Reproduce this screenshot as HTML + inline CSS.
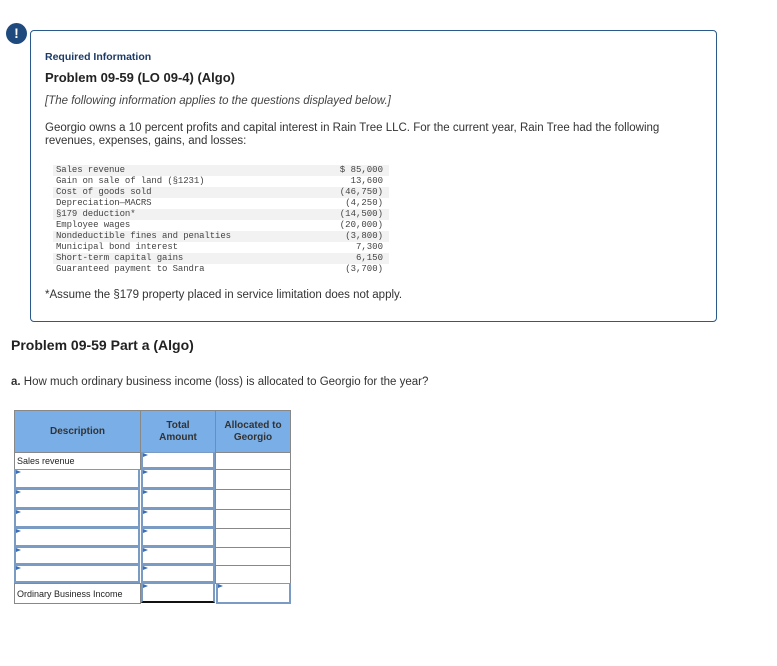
<!DOCTYPE html>
<html><head><meta charset="utf-8"><style>
body{margin:0;width:777px;height:666px;background:#fff;font-family:"Liberation Sans",sans-serif;color:#222;position:relative;overflow:hidden}
.a{position:absolute;white-space:nowrap}
.box{position:absolute;left:30px;top:30px;width:685px;height:290px;border:1px solid #2a5a8c;border-radius:4px}
.icon{position:absolute;left:6px;top:23px;width:21px;height:21px;border-radius:50%;background:#1e4a7e;color:#fff;font-weight:bold;font-size:14px;text-align:center;line-height:21px}
.dt{position:absolute;left:53px;width:336px;height:11px;font-family:"Liberation Mono",monospace;font-size:9px;line-height:11px;color:#444}
.dt span{position:absolute;left:3px;letter-spacing:-0.1px}
.dt b{position:absolute;right:6px;font-weight:normal}
.g{background:#f2f2f2}
.c{position:absolute;border:1px solid #888;box-sizing:border-box;background:#fff}
.h{background:#7aaee6;font-weight:bold;font-size:10px;color:#333;text-align:center;display:flex;align-items:center;justify-content:center;line-height:12px}
.in{border:2px solid #7a9cc4;border-top-width:1px}
.in:before{content:"";position:absolute;left:0;top:0;border-left:5px solid #3a6fb8;border-top:2px solid transparent;border-bottom:2px solid transparent}
.t{font-size:9px;padding:3px 2px;color:#222}
</style></head><body>
<div class="box"></div>
<div class="icon">!</div>
<div class="a" style="left:45px;top:51px;font-size:10.5px;font-weight:bold;color:#1e3a66">Required Information</div>
<div class="a" style="left:45px;top:70px;font-size:13px;font-weight:bold;color:#222">Problem 09-59 (LO 09-4) (Algo)</div>
<div class="a" style="left:45px;top:95px;font-size:11.5px;font-style:italic;color:#444">[The following information applies to the questions displayed below.]</div>
<div class="a" style="left:45px;top:122px;font-size:11.5px;line-height:13px;color:#333">Georgio owns a 10 percent profits and capital interest in Rain Tree LLC. For the current year, Rain Tree had the following<br>revenues, expenses, gains, and losses:</div>

<div class="dt g" style="top:165px"><span>Sales revenue</span><b>$ 85,000</b></div>
<div class="dt" style="top:176px"><span>Gain on sale of land (§1231)</span><b>13,600</b></div>
<div class="dt g" style="top:187px"><span>Cost of goods sold</span><b>(46,750)</b></div>
<div class="dt" style="top:198px"><span>Depreciation—MACRS</span><b>(4,250)</b></div>
<div class="dt g" style="top:209px"><span>§179 deduction*</span><b>(14,500)</b></div>
<div class="dt" style="top:220px"><span>Employee wages</span><b>(20,000)</b></div>
<div class="dt g" style="top:231px"><span>Nondeductible fines and penalties</span><b>(3,800)</b></div>
<div class="dt" style="top:242px"><span>Municipal bond interest</span><b>7,300</b></div>
<div class="dt g" style="top:253px"><span>Short-term capital gains</span><b>6,150</b></div>
<div class="dt" style="top:264px"><span>Guaranteed payment to Sandra</span><b>(3,700)</b></div>

<div class="a" style="left:45px;top:289px;font-size:11.5px;color:#333">*Assume the §179 property placed in service limitation does not apply.</div>
<div class="a" style="left:11px;top:337px;font-size:14px;font-weight:bold;color:#222">Problem 09-59 Part a (Algo)</div>
<div class="a" style="left:11px;top:376px;font-size:11.5px;color:#333"><b>a.</b> How much ordinary business income (loss) is allocated to Georgio for the year?</div>

<div class="c h" style="left:14px;top:410px;width:127px;height:43px">Description</div>
<div class="c h" style="left:140px;top:410px;width:76px;height:43px">Total<br>Amount</div>
<div class="c h" style="left:215px;top:410px;width:76px;height:43px">Allocated to<br>Georgio</div>

<div class="c t" style="left:14px;top:452px;width:127px;height:18px">Sales revenue</div>
<div class="c in" style="left:141px;top:452px;width:74px;height:17px"></div>
<div class="c" style="left:215px;top:452px;width:76px;height:18px"></div>

<div class="c in" style="left:14px;top:469px;width:126px;height:20px"></div><div class="c in" style="left:141px;top:469px;width:74px;height:20px"></div><div class="c" style="left:215px;top:469px;width:76px;height:21px"></div>
<div class="c in" style="left:14px;top:489px;width:126px;height:20px"></div><div class="c in" style="left:141px;top:489px;width:74px;height:20px"></div><div class="c" style="left:215px;top:489px;width:76px;height:21px"></div>
<div class="c in" style="left:14px;top:509px;width:126px;height:19px"></div><div class="c in" style="left:141px;top:509px;width:74px;height:19px"></div><div class="c" style="left:215px;top:509px;width:76px;height:20px"></div>
<div class="c in" style="left:14px;top:528px;width:126px;height:19px"></div><div class="c in" style="left:141px;top:528px;width:74px;height:19px"></div><div class="c" style="left:215px;top:528px;width:76px;height:20px"></div>
<div class="c in" style="left:14px;top:547px;width:126px;height:18px"></div><div class="c in" style="left:141px;top:547px;width:74px;height:18px"></div><div class="c" style="left:215px;top:547px;width:76px;height:19px"></div>
<div class="c in" style="left:14px;top:565px;width:126px;height:18px"></div><div class="c in" style="left:141px;top:565px;width:74px;height:18px"></div><div class="c" style="left:215px;top:565px;width:76px;height:19px"></div>

<div class="c t" style="left:14px;top:583px;width:127px;height:21px;padding-top:5px">Ordinary Business Income</div>
<div class="c in" style="left:141px;top:583px;width:74px;height:20px;border-bottom:2px solid #111"></div>
<div class="c in" style="left:216px;top:583px;width:75px;height:21px"></div>
</body></html>
